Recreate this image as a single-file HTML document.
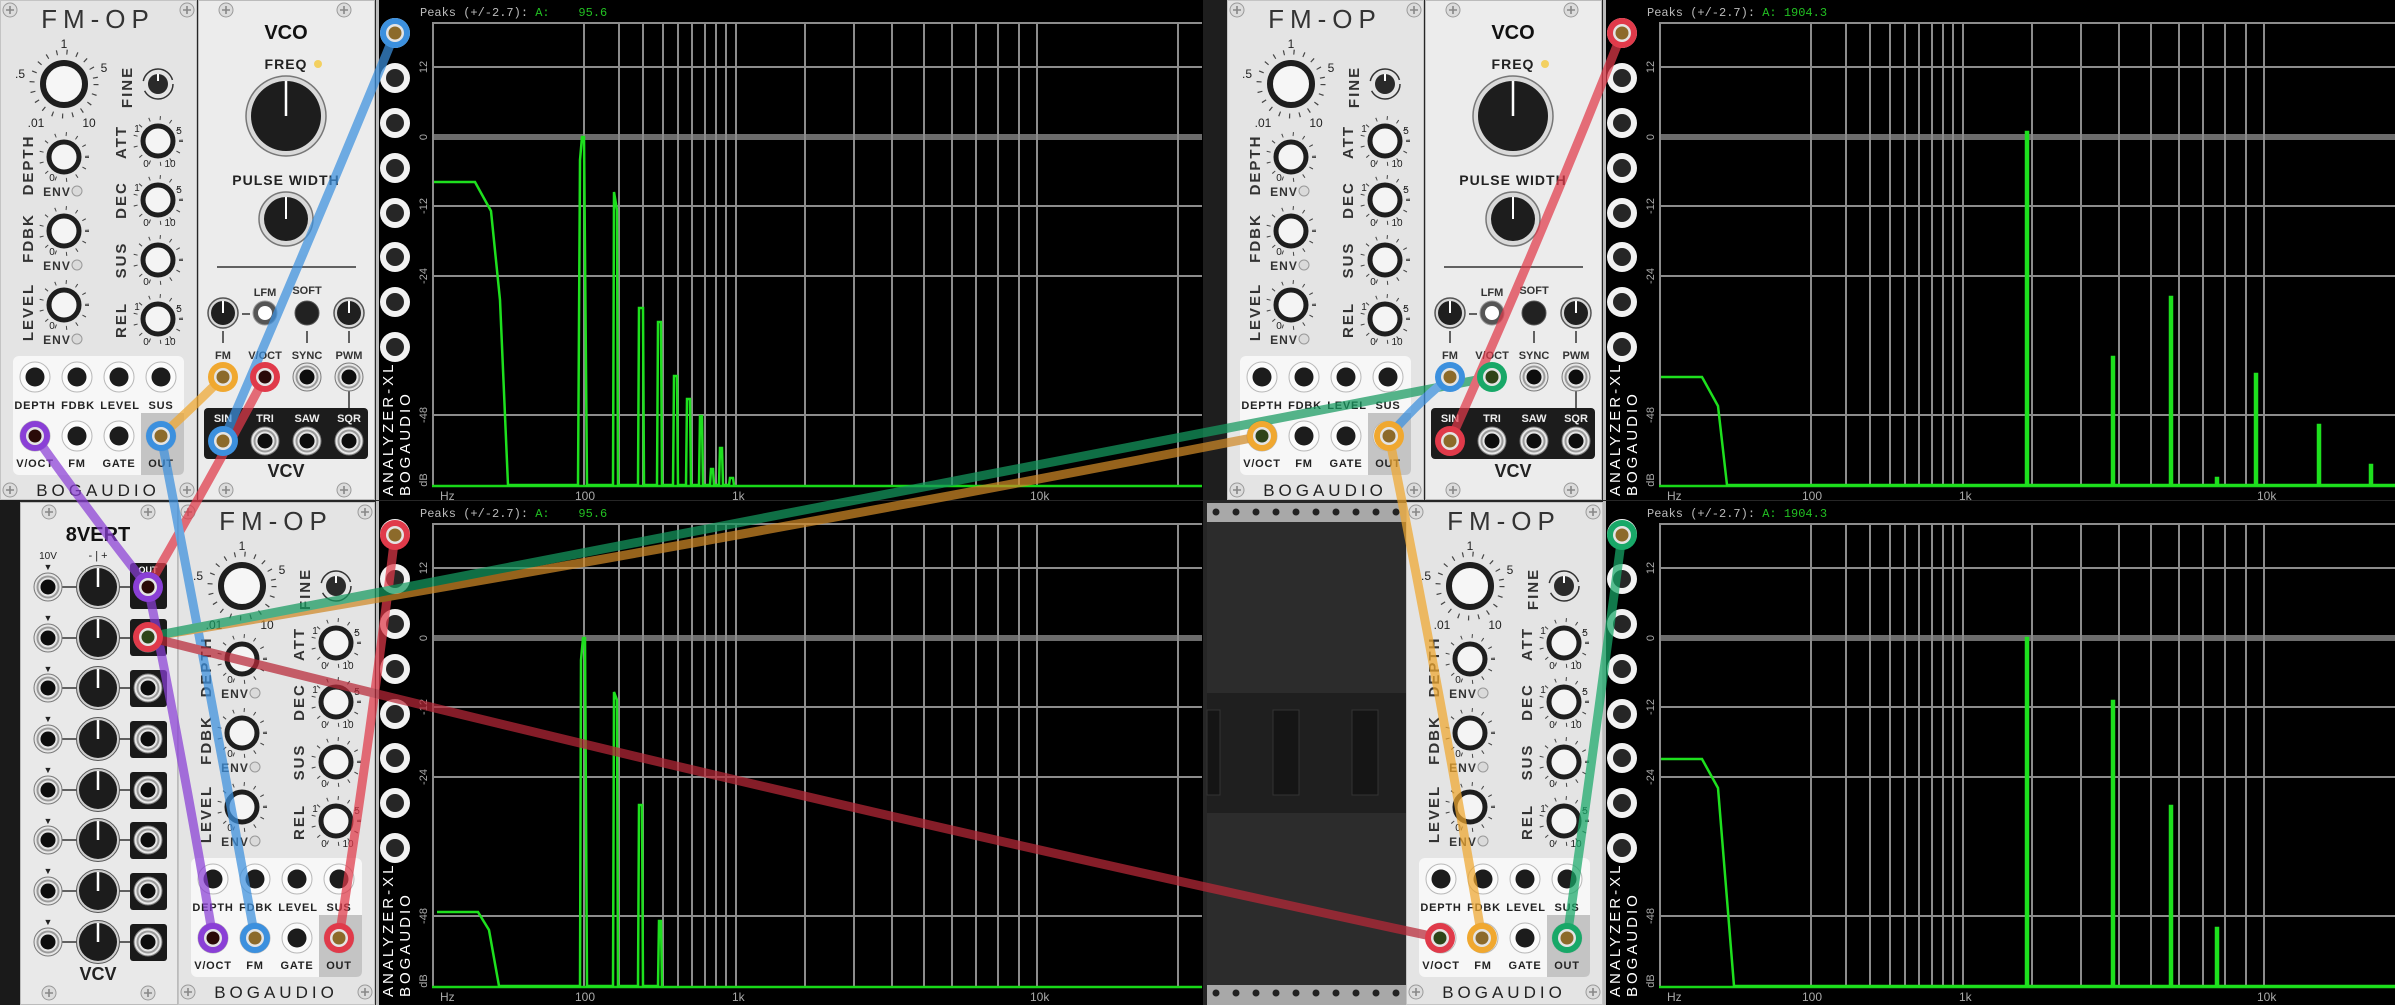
<!DOCTYPE html>
<html><head><meta charset="utf-8"><style>
html,body{margin:0;padding:0;background:#222;}
svg{display:block}
text{font-family:"Liberation Sans",sans-serif;}
.m{font-family:"Liberation Mono",monospace;}
.jl{font-size:11px;font-weight:bold;fill:#222;letter-spacing:0.8px;}
</style></head><body>
<svg width="2395" height="1005" viewBox="0 0 2395 1005" xmlns="http://www.w3.org/2000/svg">
<defs>
<g id="scr"><circle r="7" fill="#dcdcdc" stroke="#9a9a9a" stroke-width="1"/><path d="M-4 0H4M0 -4V4" stroke="#888" stroke-width="1.6"/></g>
<g id="jw"><circle r="15" fill="#fbfbfb" stroke="#b8b8b8" stroke-width="1"/><circle r="9.5" fill="#1c1c1c"/></g>
<g id="jv"><circle r="14" fill="#e6e6e6" stroke="#7a7a7a" stroke-width="1"/><circle r="10.5" fill="none" stroke="#9a9a9a" stroke-width="2"/><circle r="7.5" fill="#0d0d0d"/></g>
<g id="aj"><circle r="15" fill="#f2f2f2"/><circle r="9" fill="#262626"/></g>
<g id="kw"><circle r="23" fill="none" stroke="#444" stroke-width="4" stroke-dasharray="1 10"/><circle r="15" fill="#f4f4f4" stroke="#1e1e1e" stroke-width="5"/></g>
<g id="kwl"><circle r="32" fill="none" stroke="#444" stroke-width="5" stroke-dasharray="1.2 9"/><circle r="21" fill="#f6f6f6" stroke="#1e1e1e" stroke-width="6"/></g>
<g id="kf"><circle r="15" fill="none" stroke="#333" stroke-width="1.5" stroke-dasharray="40 10"/><circle r="10" fill="#2a2a2a"/><path d="M0 -10V-3" stroke="#fff" stroke-width="2"/></g>
<g id="kb"><circle r="15" fill="#d8d8d8" stroke="#555" stroke-width="1.5"/><circle r="12" fill="#1f1f1f"/><path d="M0 0V-12" stroke="#fff" stroke-width="2"/></g>
<g id="k8"><circle r="21.5" fill="#cfcfcf" stroke="#555"/><circle r="19" fill="#1c1c1c"/><path d="M0 0V-19" stroke="#fff" stroke-width="2.5"/></g>
<g id="pl"><circle r="9" fill="#e4e4e4"/><circle r="6.5" fill="#8c6a2a"/></g>
<g id="pld"><circle r="9" fill="#e4e4e4"/><circle r="6.5" fill="#2a0a08"/></g>
<g id="grid" stroke="#8c8c8c" stroke-width="2" fill="none">
<path d="M432 23H1202M432 67H1202M432 206H1202M432 276H1202M432 415H1202"/>
<path d="M432 137H1202" stroke="#6c6c6c" stroke-width="6"/>
<path d="M433 22V487M584 22V487M619 22V487M643 22V487M663 22V487M678 22V487M692 22V487M705 22V487M716 22V487M726 22V487M736 22V487M805 22V487M854 22V487M892 22V487M924 22V487M952 22V487M976 22V487M998 22V487M1019 22V487M1037 22V487M1178 22V487"/>
<path d="M432 486H1202" stroke="#18d818" stroke-width="2.5"/>
</g>
<g id="ajacks"><use href="#aj" x="395" y="33"/><use href="#aj" x="395" y="78"/><use href="#aj" x="395" y="123"/><use href="#aj" x="395" y="168"/><use href="#aj" x="395" y="213"/><use href="#aj" x="395" y="257"/><use href="#aj" x="395" y="302"/><use href="#aj" x="395" y="347"/></g>
</defs>

<rect width="2395" height="1005" fill="#262626"/>
<rect x="0" y="500" width="20" height="505" fill="#1a1a1a"/>
<rect x="1200" y="0" width="28" height="500" fill="#1e1e1e"/>
<rect x="1207" y="503" width="199" height="502" fill="#2c2c2c"/>
<rect x="1207" y="693" width="199" height="120" fill="#1f1f1f"/>
<rect x="1207" y="503" width="199" height="19" fill="#a8a8a8"/>
<rect x="1207" y="985" width="199" height="20" fill="#a8a8a8"/>
<g fill="#222"><circle cx="1216" cy="512" r="3.5"/><circle cx="1236" cy="512" r="3.5"/><circle cx="1256" cy="512" r="3.5"/><circle cx="1276" cy="512" r="3.5"/><circle cx="1296" cy="512" r="3.5"/><circle cx="1316" cy="512" r="3.5"/><circle cx="1336" cy="512" r="3.5"/><circle cx="1356" cy="512" r="3.5"/><circle cx="1376" cy="512" r="3.5"/><circle cx="1396" cy="512" r="3.5"/>
<circle cx="1216" cy="993" r="3.5"/><circle cx="1236" cy="993" r="3.5"/><circle cx="1256" cy="993" r="3.5"/><circle cx="1276" cy="993" r="3.5"/><circle cx="1296" cy="993" r="3.5"/><circle cx="1316" cy="993" r="3.5"/><circle cx="1336" cy="993" r="3.5"/><circle cx="1356" cy="993" r="3.5"/><circle cx="1376" cy="993" r="3.5"/><circle cx="1396" cy="993" r="3.5"/></g>
<g fill="#151515" stroke="#333"><rect x="1207" y="710" width="13" height="85"/><rect x="1273" y="710" width="26" height="85"/><rect x="1352" y="710" width="26" height="85"/></g>

<!-- FMOP 1 -->
<g transform="translate(0,0)">
<rect x="0.5" y="0.5" width="196" height="499" fill="#e4e4e4" stroke="#c4c4c4"/>
<use href="#scr" x="10" y="10"/><use href="#scr" x="187" y="10"/><use href="#scr" x="10" y="490"/><use href="#scr" x="187" y="490"/>
<text x="98" y="28" text-anchor="middle" font-size="26" letter-spacing="6" fill="#333">FM-OP</text>
<use href="#kwl" x="64" y="84"/>
<text x="20" y="78" font-size="12" fill="#222" text-anchor="middle">.5</text><text x="64" y="48" font-size="12" fill="#222" text-anchor="middle">1</text><text x="104" y="72" font-size="12" fill="#222" text-anchor="middle">5</text><text x="36" y="127" font-size="12" fill="#222" text-anchor="middle">.01</text><text x="89" y="127" font-size="12" fill="#222" text-anchor="middle">10</text>
<text transform="translate(132,87) rotate(-90)" text-anchor="middle" font-size="15" font-weight="bold" letter-spacing="2" fill="#333">FINE</text>
<use href="#kf" x="158" y="84"/>
<text transform="translate(33,165) rotate(-90)" text-anchor="middle" font-size="15" font-weight="bold" letter-spacing="2" fill="#333">DEPTH</text>
<text transform="translate(33,238) rotate(-90)" text-anchor="middle" font-size="15" font-weight="bold" letter-spacing="2" fill="#333">FDBK</text>
<text transform="translate(33,312) rotate(-90)" text-anchor="middle" font-size="15" font-weight="bold" letter-spacing="2" fill="#333">LEVEL</text>
<text transform="translate(126,142) rotate(-90)" text-anchor="middle" font-size="15" font-weight="bold" letter-spacing="2" fill="#333">ATT</text>
<text transform="translate(126,200) rotate(-90)" text-anchor="middle" font-size="15" font-weight="bold" letter-spacing="2" fill="#333">DEC</text>
<text transform="translate(126,260) rotate(-90)" text-anchor="middle" font-size="15" font-weight="bold" letter-spacing="2" fill="#333">SUS</text>
<text transform="translate(126,320) rotate(-90)" text-anchor="middle" font-size="15" font-weight="bold" letter-spacing="2" fill="#333">REL</text>
<use href="#kw" x="64" y="157"/><use href="#kw" x="64" y="231"/><use href="#kw" x="64" y="305"/>
<use href="#kw" x="158" y="141"/><use href="#kw" x="158" y="200"/><use href="#kw" x="158" y="260"/><use href="#kw" x="158" y="319"/>
<g font-size="10" fill="#222" text-anchor="middle"><text x="52" y="181">0</text><text x="52" y="255">0</text><text x="52" y="329">0</text>
<text x="137" y="132">1</text><text x="179" y="134">5</text><text x="146" y="167">0</text><text x="170" y="167">10</text>
<text x="137" y="191">1</text><text x="179" y="193">5</text><text x="146" y="226">0</text><text x="170" y="226">10</text>
<text x="146" y="285">0</text>
<text x="137" y="310">1</text><text x="179" y="312">5</text><text x="146" y="345">0</text><text x="170" y="345">10</text></g>
<g font-size="12" font-weight="bold" fill="#333" text-anchor="middle" letter-spacing="1"><text x="57" y="196">ENV</text><text x="57" y="270">ENV</text><text x="57" y="344">ENV</text></g>
<g fill="#dadada" stroke="#999"><circle cx="77" cy="191" r="5"/><circle cx="77" cy="265" r="5"/><circle cx="77" cy="339" r="5"/></g>
<rect x="13" y="356" width="171" height="119" rx="6" fill="#f7f7f7"/>
<path d="M141 413H184V469Q184 475 178 475H141Z" fill="#c4c4c4"/>
<use href="#jw" x="35" y="377"/><use href="#jw" x="77" y="377"/><use href="#jw" x="119" y="377"/><use href="#jw" x="161" y="377"/>
<use href="#jw" x="35" y="436"/><use href="#jw" x="77" y="436"/><use href="#jw" x="119" y="436"/><use href="#jw" x="161" y="436"/>
<g class="jl" text-anchor="middle"><text x="35" y="409">DEPTH</text><text x="78" y="409">FDBK</text><text x="120" y="409">LEVEL</text><text x="161" y="409">SUS</text><text x="35" y="467">V/OCT</text><text x="77" y="467">FM</text><text x="119" y="467">GATE</text><text x="161" y="467">OUT</text></g>
<text x="98" y="496" text-anchor="middle" font-size="17" letter-spacing="4" fill="#222">BOGAUDIO</text>
</g>

<!-- FMOP 2 -->
<g transform="translate(178,502)">
<rect x="0.5" y="0.5" width="196" height="502" fill="#e4e4e4" stroke="#c4c4c4"/>
<use href="#scr" x="10" y="10"/><use href="#scr" x="187" y="10"/><use href="#scr" x="10" y="490"/><use href="#scr" x="187" y="490"/>
<text x="98" y="28" text-anchor="middle" font-size="26" letter-spacing="6" fill="#333">FM-OP</text>
<use href="#kwl" x="64" y="84"/>
<text x="20" y="78" font-size="12" fill="#222" text-anchor="middle">.5</text><text x="64" y="48" font-size="12" fill="#222" text-anchor="middle">1</text><text x="104" y="72" font-size="12" fill="#222" text-anchor="middle">5</text><text x="36" y="127" font-size="12" fill="#222" text-anchor="middle">.01</text><text x="89" y="127" font-size="12" fill="#222" text-anchor="middle">10</text>
<text transform="translate(132,87) rotate(-90)" text-anchor="middle" font-size="15" font-weight="bold" letter-spacing="2" fill="#333">FINE</text>
<use href="#kf" x="158" y="84"/>
<text transform="translate(33,165) rotate(-90)" text-anchor="middle" font-size="15" font-weight="bold" letter-spacing="2" fill="#333">DEPTH</text>
<text transform="translate(33,238) rotate(-90)" text-anchor="middle" font-size="15" font-weight="bold" letter-spacing="2" fill="#333">FDBK</text>
<text transform="translate(33,312) rotate(-90)" text-anchor="middle" font-size="15" font-weight="bold" letter-spacing="2" fill="#333">LEVEL</text>
<text transform="translate(126,142) rotate(-90)" text-anchor="middle" font-size="15" font-weight="bold" letter-spacing="2" fill="#333">ATT</text>
<text transform="translate(126,200) rotate(-90)" text-anchor="middle" font-size="15" font-weight="bold" letter-spacing="2" fill="#333">DEC</text>
<text transform="translate(126,260) rotate(-90)" text-anchor="middle" font-size="15" font-weight="bold" letter-spacing="2" fill="#333">SUS</text>
<text transform="translate(126,320) rotate(-90)" text-anchor="middle" font-size="15" font-weight="bold" letter-spacing="2" fill="#333">REL</text>
<use href="#kw" x="64" y="157"/><use href="#kw" x="64" y="231"/><use href="#kw" x="64" y="305"/>
<use href="#kw" x="158" y="141"/><use href="#kw" x="158" y="200"/><use href="#kw" x="158" y="260"/><use href="#kw" x="158" y="319"/>
<g font-size="10" fill="#222" text-anchor="middle"><text x="52" y="181">0</text><text x="52" y="255">0</text><text x="52" y="329">0</text>
<text x="137" y="132">1</text><text x="179" y="134">5</text><text x="146" y="167">0</text><text x="170" y="167">10</text>
<text x="137" y="191">1</text><text x="179" y="193">5</text><text x="146" y="226">0</text><text x="170" y="226">10</text>
<text x="146" y="285">0</text>
<text x="137" y="310">1</text><text x="179" y="312">5</text><text x="146" y="345">0</text><text x="170" y="345">10</text></g>
<g font-size="12" font-weight="bold" fill="#333" text-anchor="middle" letter-spacing="1"><text x="57" y="196">ENV</text><text x="57" y="270">ENV</text><text x="57" y="344">ENV</text></g>
<g fill="#dadada" stroke="#999"><circle cx="77" cy="191" r="5"/><circle cx="77" cy="265" r="5"/><circle cx="77" cy="339" r="5"/></g>
<rect x="13" y="356" width="171" height="119" rx="6" fill="#f7f7f7"/>
<path d="M141 413H184V469Q184 475 178 475H141Z" fill="#c4c4c4"/>
<use href="#jw" x="35" y="377"/><use href="#jw" x="77" y="377"/><use href="#jw" x="119" y="377"/><use href="#jw" x="161" y="377"/>
<use href="#jw" x="35" y="436"/><use href="#jw" x="77" y="436"/><use href="#jw" x="119" y="436"/><use href="#jw" x="161" y="436"/>
<g class="jl" text-anchor="middle"><text x="35" y="409">DEPTH</text><text x="78" y="409">FDBK</text><text x="120" y="409">LEVEL</text><text x="161" y="409">SUS</text><text x="35" y="467">V/OCT</text><text x="77" y="467">FM</text><text x="119" y="467">GATE</text><text x="161" y="467">OUT</text></g>
<text x="98" y="496" text-anchor="middle" font-size="17" letter-spacing="4" fill="#222">BOGAUDIO</text>
</g>

<!-- FMOP 3 -->
<g transform="translate(1227,0)">
<rect x="0.5" y="0.5" width="196" height="499" fill="#e4e4e4" stroke="#c4c4c4"/>
<use href="#scr" x="10" y="10"/><use href="#scr" x="187" y="10"/><use href="#scr" x="10" y="490"/><use href="#scr" x="187" y="490"/>
<text x="98" y="28" text-anchor="middle" font-size="26" letter-spacing="6" fill="#333">FM-OP</text>
<use href="#kwl" x="64" y="84"/>
<text x="20" y="78" font-size="12" fill="#222" text-anchor="middle">.5</text><text x="64" y="48" font-size="12" fill="#222" text-anchor="middle">1</text><text x="104" y="72" font-size="12" fill="#222" text-anchor="middle">5</text><text x="36" y="127" font-size="12" fill="#222" text-anchor="middle">.01</text><text x="89" y="127" font-size="12" fill="#222" text-anchor="middle">10</text>
<text transform="translate(132,87) rotate(-90)" text-anchor="middle" font-size="15" font-weight="bold" letter-spacing="2" fill="#333">FINE</text>
<use href="#kf" x="158" y="84"/>
<text transform="translate(33,165) rotate(-90)" text-anchor="middle" font-size="15" font-weight="bold" letter-spacing="2" fill="#333">DEPTH</text>
<text transform="translate(33,238) rotate(-90)" text-anchor="middle" font-size="15" font-weight="bold" letter-spacing="2" fill="#333">FDBK</text>
<text transform="translate(33,312) rotate(-90)" text-anchor="middle" font-size="15" font-weight="bold" letter-spacing="2" fill="#333">LEVEL</text>
<text transform="translate(126,142) rotate(-90)" text-anchor="middle" font-size="15" font-weight="bold" letter-spacing="2" fill="#333">ATT</text>
<text transform="translate(126,200) rotate(-90)" text-anchor="middle" font-size="15" font-weight="bold" letter-spacing="2" fill="#333">DEC</text>
<text transform="translate(126,260) rotate(-90)" text-anchor="middle" font-size="15" font-weight="bold" letter-spacing="2" fill="#333">SUS</text>
<text transform="translate(126,320) rotate(-90)" text-anchor="middle" font-size="15" font-weight="bold" letter-spacing="2" fill="#333">REL</text>
<use href="#kw" x="64" y="157"/><use href="#kw" x="64" y="231"/><use href="#kw" x="64" y="305"/>
<use href="#kw" x="158" y="141"/><use href="#kw" x="158" y="200"/><use href="#kw" x="158" y="260"/><use href="#kw" x="158" y="319"/>
<g font-size="10" fill="#222" text-anchor="middle"><text x="52" y="181">0</text><text x="52" y="255">0</text><text x="52" y="329">0</text>
<text x="137" y="132">1</text><text x="179" y="134">5</text><text x="146" y="167">0</text><text x="170" y="167">10</text>
<text x="137" y="191">1</text><text x="179" y="193">5</text><text x="146" y="226">0</text><text x="170" y="226">10</text>
<text x="146" y="285">0</text>
<text x="137" y="310">1</text><text x="179" y="312">5</text><text x="146" y="345">0</text><text x="170" y="345">10</text></g>
<g font-size="12" font-weight="bold" fill="#333" text-anchor="middle" letter-spacing="1"><text x="57" y="196">ENV</text><text x="57" y="270">ENV</text><text x="57" y="344">ENV</text></g>
<g fill="#dadada" stroke="#999"><circle cx="77" cy="191" r="5"/><circle cx="77" cy="265" r="5"/><circle cx="77" cy="339" r="5"/></g>
<rect x="13" y="356" width="171" height="119" rx="6" fill="#f7f7f7"/>
<path d="M141 413H184V469Q184 475 178 475H141Z" fill="#c4c4c4"/>
<use href="#jw" x="35" y="377"/><use href="#jw" x="77" y="377"/><use href="#jw" x="119" y="377"/><use href="#jw" x="161" y="377"/>
<use href="#jw" x="35" y="436"/><use href="#jw" x="77" y="436"/><use href="#jw" x="119" y="436"/><use href="#jw" x="161" y="436"/>
<g class="jl" text-anchor="middle"><text x="35" y="409">DEPTH</text><text x="78" y="409">FDBK</text><text x="120" y="409">LEVEL</text><text x="161" y="409">SUS</text><text x="35" y="467">V/OCT</text><text x="77" y="467">FM</text><text x="119" y="467">GATE</text><text x="161" y="467">OUT</text></g>
<text x="98" y="496" text-anchor="middle" font-size="17" letter-spacing="4" fill="#222">BOGAUDIO</text>
</g>

<!-- FMOP 4 -->
<g transform="translate(1406,502)">
<rect x="0.5" y="0.5" width="196" height="502" fill="#e4e4e4" stroke="#c4c4c4"/>
<use href="#scr" x="10" y="10"/><use href="#scr" x="187" y="10"/><use href="#scr" x="10" y="490"/><use href="#scr" x="187" y="490"/>
<text x="98" y="28" text-anchor="middle" font-size="26" letter-spacing="6" fill="#333">FM-OP</text>
<use href="#kwl" x="64" y="84"/>
<text x="20" y="78" font-size="12" fill="#222" text-anchor="middle">.5</text><text x="64" y="48" font-size="12" fill="#222" text-anchor="middle">1</text><text x="104" y="72" font-size="12" fill="#222" text-anchor="middle">5</text><text x="36" y="127" font-size="12" fill="#222" text-anchor="middle">.01</text><text x="89" y="127" font-size="12" fill="#222" text-anchor="middle">10</text>
<text transform="translate(132,87) rotate(-90)" text-anchor="middle" font-size="15" font-weight="bold" letter-spacing="2" fill="#333">FINE</text>
<use href="#kf" x="158" y="84"/>
<text transform="translate(33,165) rotate(-90)" text-anchor="middle" font-size="15" font-weight="bold" letter-spacing="2" fill="#333">DEPTH</text>
<text transform="translate(33,238) rotate(-90)" text-anchor="middle" font-size="15" font-weight="bold" letter-spacing="2" fill="#333">FDBK</text>
<text transform="translate(33,312) rotate(-90)" text-anchor="middle" font-size="15" font-weight="bold" letter-spacing="2" fill="#333">LEVEL</text>
<text transform="translate(126,142) rotate(-90)" text-anchor="middle" font-size="15" font-weight="bold" letter-spacing="2" fill="#333">ATT</text>
<text transform="translate(126,200) rotate(-90)" text-anchor="middle" font-size="15" font-weight="bold" letter-spacing="2" fill="#333">DEC</text>
<text transform="translate(126,260) rotate(-90)" text-anchor="middle" font-size="15" font-weight="bold" letter-spacing="2" fill="#333">SUS</text>
<text transform="translate(126,320) rotate(-90)" text-anchor="middle" font-size="15" font-weight="bold" letter-spacing="2" fill="#333">REL</text>
<use href="#kw" x="64" y="157"/><use href="#kw" x="64" y="231"/><use href="#kw" x="64" y="305"/>
<use href="#kw" x="158" y="141"/><use href="#kw" x="158" y="200"/><use href="#kw" x="158" y="260"/><use href="#kw" x="158" y="319"/>
<g font-size="10" fill="#222" text-anchor="middle"><text x="52" y="181">0</text><text x="52" y="255">0</text><text x="52" y="329">0</text>
<text x="137" y="132">1</text><text x="179" y="134">5</text><text x="146" y="167">0</text><text x="170" y="167">10</text>
<text x="137" y="191">1</text><text x="179" y="193">5</text><text x="146" y="226">0</text><text x="170" y="226">10</text>
<text x="146" y="285">0</text>
<text x="137" y="310">1</text><text x="179" y="312">5</text><text x="146" y="345">0</text><text x="170" y="345">10</text></g>
<g font-size="12" font-weight="bold" fill="#333" text-anchor="middle" letter-spacing="1"><text x="57" y="196">ENV</text><text x="57" y="270">ENV</text><text x="57" y="344">ENV</text></g>
<g fill="#dadada" stroke="#999"><circle cx="77" cy="191" r="5"/><circle cx="77" cy="265" r="5"/><circle cx="77" cy="339" r="5"/></g>
<rect x="13" y="356" width="171" height="119" rx="6" fill="#f7f7f7"/>
<path d="M141 413H184V469Q184 475 178 475H141Z" fill="#c4c4c4"/>
<use href="#jw" x="35" y="377"/><use href="#jw" x="77" y="377"/><use href="#jw" x="119" y="377"/><use href="#jw" x="161" y="377"/>
<use href="#jw" x="35" y="436"/><use href="#jw" x="77" y="436"/><use href="#jw" x="119" y="436"/><use href="#jw" x="161" y="436"/>
<g class="jl" text-anchor="middle"><text x="35" y="409">DEPTH</text><text x="78" y="409">FDBK</text><text x="120" y="409">LEVEL</text><text x="161" y="409">SUS</text><text x="35" y="467">V/OCT</text><text x="77" y="467">FM</text><text x="119" y="467">GATE</text><text x="161" y="467">OUT</text></g>
<text x="98" y="496" text-anchor="middle" font-size="17" letter-spacing="4" fill="#222">BOGAUDIO</text>
</g>

<!-- VCO -->
<g transform="translate(198,0)">
<rect x="0.5" y="0.5" width="176" height="499" fill="#ececec" stroke="#bbb"/>
<use href="#scr" x="28" y="10"/><use href="#scr" x="146" y="10"/><use href="#scr" x="28" y="490"/><use href="#scr" x="146" y="490"/>
<text x="88" y="39" text-anchor="middle" font-size="20" font-weight="bold" fill="#111">VCO</text>
<text x="88" y="69" text-anchor="middle" font-size="14" font-weight="bold" letter-spacing="1" fill="#222">FREQ</text>
<circle cx="120" cy="64" r="4" fill="#f3d060"/>
<circle cx="88" cy="116" r="40" fill="#d9d9d9" stroke="#777" stroke-width="1.5"/><circle cx="88" cy="116" r="35" fill="#1d1d1d"/><path d="M88 116V81" stroke="#fff" stroke-width="2.5"/>
<text x="88" y="185" text-anchor="middle" font-size="14" font-weight="bold" letter-spacing="1" fill="#222">PULSE WIDTH</text>
<circle cx="88" cy="219" r="27" fill="#d9d9d9" stroke="#777" stroke-width="1.5"/><circle cx="88" cy="219" r="22" fill="#1d1d1d"/><path d="M88 219V197" stroke="#fff" stroke-width="2"/>
<path d="M19 267H158" stroke="#333" stroke-width="1.5"/>
<text x="67" y="296" text-anchor="middle" font-size="11" font-weight="bold" fill="#333">LFM</text><text x="109" y="294" text-anchor="middle" font-size="11" font-weight="bold" fill="#333">SOFT</text>
<use href="#kb" x="25" y="313"/><path d="M44 314H52" stroke="#333" stroke-width="1.5"/><circle cx="67" cy="313" r="12" fill="#555" stroke="#999"/><circle cx="67" cy="313" r="7" fill="#fff"/><circle cx="109" cy="313" r="12" fill="#222" stroke="#555"/><use href="#kb" x="151" y="313"/>
<path d="M25 331V343M109 331V343M151 331V343M151 390V408" stroke="#333" stroke-width="1.5"/>
<g font-size="11" font-weight="bold" fill="#333" text-anchor="middle"><text x="25" y="359">FM</text><text x="67" y="359">V/OCT</text><text x="109" y="359">SYNC</text><text x="151" y="359">PWM</text></g>
<use href="#jv" x="25" y="377"/><use href="#jv" x="67" y="377"/><use href="#jv" x="109" y="377"/><use href="#jv" x="151" y="377"/>
<rect x="6" y="408" width="164" height="51" rx="4" fill="#1c1c1c"/>
<g font-size="11" font-weight="bold" fill="#eee" text-anchor="middle"><text x="25" y="422">SIN</text><text x="67" y="422">TRI</text><text x="109" y="422">SAW</text><text x="151" y="422">SQR</text></g>
<use href="#jv" x="25" y="441"/><use href="#jv" x="67" y="441"/><use href="#jv" x="109" y="441"/><use href="#jv" x="151" y="441"/>
<text x="88" y="477" text-anchor="middle" font-size="18" font-weight="bold" fill="#222">VCV</text>
</g>
<g transform="translate(1425,0)">
<rect x="0.5" y="0.5" width="176" height="499" fill="#ececec" stroke="#bbb"/>
<use href="#scr" x="28" y="10"/><use href="#scr" x="146" y="10"/><use href="#scr" x="28" y="490"/><use href="#scr" x="146" y="490"/>
<text x="88" y="39" text-anchor="middle" font-size="20" font-weight="bold" fill="#111">VCO</text>
<text x="88" y="69" text-anchor="middle" font-size="14" font-weight="bold" letter-spacing="1" fill="#222">FREQ</text>
<circle cx="120" cy="64" r="4" fill="#f3d060"/>
<circle cx="88" cy="116" r="40" fill="#d9d9d9" stroke="#777" stroke-width="1.5"/><circle cx="88" cy="116" r="35" fill="#1d1d1d"/><path d="M88 116V81" stroke="#fff" stroke-width="2.5"/>
<text x="88" y="185" text-anchor="middle" font-size="14" font-weight="bold" letter-spacing="1" fill="#222">PULSE WIDTH</text>
<circle cx="88" cy="219" r="27" fill="#d9d9d9" stroke="#777" stroke-width="1.5"/><circle cx="88" cy="219" r="22" fill="#1d1d1d"/><path d="M88 219V197" stroke="#fff" stroke-width="2"/>
<path d="M19 267H158" stroke="#333" stroke-width="1.5"/>
<text x="67" y="296" text-anchor="middle" font-size="11" font-weight="bold" fill="#333">LFM</text><text x="109" y="294" text-anchor="middle" font-size="11" font-weight="bold" fill="#333">SOFT</text>
<use href="#kb" x="25" y="313"/><path d="M44 314H52" stroke="#333" stroke-width="1.5"/><circle cx="67" cy="313" r="12" fill="#555" stroke="#999"/><circle cx="67" cy="313" r="7" fill="#fff"/><circle cx="109" cy="313" r="12" fill="#222" stroke="#555"/><use href="#kb" x="151" y="313"/>
<path d="M25 331V343M109 331V343M151 331V343M151 390V408" stroke="#333" stroke-width="1.5"/>
<g font-size="11" font-weight="bold" fill="#333" text-anchor="middle"><text x="25" y="359">FM</text><text x="67" y="359">V/OCT</text><text x="109" y="359">SYNC</text><text x="151" y="359">PWM</text></g>
<use href="#jv" x="25" y="377"/><use href="#jv" x="67" y="377"/><use href="#jv" x="109" y="377"/><use href="#jv" x="151" y="377"/>
<rect x="6" y="408" width="164" height="51" rx="4" fill="#1c1c1c"/>
<g font-size="11" font-weight="bold" fill="#eee" text-anchor="middle"><text x="25" y="422">SIN</text><text x="67" y="422">TRI</text><text x="109" y="422">SAW</text><text x="151" y="422">SQR</text></g>
<use href="#jv" x="25" y="441"/><use href="#jv" x="67" y="441"/><use href="#jv" x="109" y="441"/><use href="#jv" x="151" y="441"/>
<text x="88" y="477" text-anchor="middle" font-size="18" font-weight="bold" fill="#222">VCV</text>
</g>

<!-- 8VERT -->
<g transform="translate(20,502)">
<rect x="0.5" y="0.5" width="157" height="502" fill="#e9e9e9" stroke="#bbb"/>
<use href="#scr" x="29" y="10"/><use href="#scr" x="128" y="10"/><use href="#scr" x="29" y="491"/><use href="#scr" x="128" y="491"/>
<text x="78" y="39" text-anchor="middle" font-size="20" font-weight="bold" fill="#111">8VERT</text>
<text x="28" y="57" text-anchor="middle" font-size="10" fill="#222">10V</text><text x="78" y="57" text-anchor="middle" font-size="11" fill="#222">- | +</text>
<g fill="#222" font-size="9" text-anchor="middle"><text x="28" y="68">▼</text><text x="28" y="119">▼</text><text x="28" y="170">▼</text><text x="28" y="220">▼</text><text x="28" y="271">▼</text><text x="28" y="322">▼</text><text x="28" y="372">▼</text><text x="28" y="423">▼</text></g>
<g stroke="#333" stroke-width="1.5"><path d="M28 85H128M28 136H128M28 186H128M28 237H128M28 288H128M28 338H128M28 389H128M28 440H128"/></g>
<g fill="#1a1a1a"><rect x="110" y="61" width="37" height="46" rx="3"/><rect x="110" y="117" width="37" height="37" rx="3"/><rect x="110" y="168" width="37" height="37" rx="3"/><rect x="110" y="219" width="37" height="37" rx="3"/><rect x="110" y="270" width="37" height="37" rx="3"/><rect x="110" y="320" width="37" height="37" rx="3"/><rect x="110" y="371" width="37" height="37" rx="3"/><rect x="110" y="422" width="37" height="37" rx="3"/></g>
<text x="128" y="71" text-anchor="middle" font-size="9" font-weight="bold" fill="#fff">OUT</text>
<use href="#jv" x="28" y="85"/><use href="#jv" x="28" y="136"/><use href="#jv" x="28" y="186"/><use href="#jv" x="28" y="237"/><use href="#jv" x="28" y="288"/><use href="#jv" x="28" y="338"/><use href="#jv" x="28" y="389"/><use href="#jv" x="28" y="440"/>
<use href="#k8" x="78" y="85"/><use href="#k8" x="78" y="136"/><use href="#k8" x="78" y="186"/><use href="#k8" x="78" y="237"/><use href="#k8" x="78" y="288"/><use href="#k8" x="78" y="338"/><use href="#k8" x="78" y="389"/><use href="#k8" x="78" y="440"/>
<use href="#jv" x="128" y="85"/><use href="#jv" x="128" y="136"/><use href="#jv" x="128" y="186"/><use href="#jv" x="128" y="237"/><use href="#jv" x="128" y="288"/><use href="#jv" x="128" y="338"/><use href="#jv" x="128" y="389"/><use href="#jv" x="128" y="440"/>
<text x="78" y="478" text-anchor="middle" font-size="18" font-weight="bold" fill="#222">VCV</text>
</g>

<!-- Analyzers -->
<g>
<rect x="376" y="0" width="827" height="500" fill="#000"/>
<rect x="376" y="0" width="3" height="500" fill="#bbb"/>
<use href="#ajacks"/><use href="#grid"/>
<text class="m" x="420" y="16" font-size="12" fill="#bbb" xml:space="preserve">Peaks (+/-2.7): <tspan fill="#22c022">A:    95.6</tspan></text>
<g class="m" font-size="11" fill="#aaa" text-anchor="middle"><text transform="translate(427,67) rotate(-90)">12</text><text transform="translate(427,137) rotate(-90)">0</text><text transform="translate(427,206) rotate(-90)">-12</text><text transform="translate(427,276) rotate(-90)">-24</text><text transform="translate(427,415) rotate(-90)">-48</text><text transform="translate(427,480) rotate(-90)">dB</text></g>
<g class="m" font-size="12" fill="#aaa"><text x="440" y="500">Hz</text><text x="575" y="500">100</text><text x="732" y="500">1k</text><text x="1030" y="500">10k</text></g>
<text transform="translate(393,496) rotate(-90)" font-size="15" letter-spacing="3" fill="#fff">ANALYZER-XL</text>
<text transform="translate(410,496) rotate(-90)" font-size="15" letter-spacing="3" fill="#fff">BOGAUDIO</text>
<polyline fill="none" stroke="#1ee01e" stroke-width="2.5" points="434,182 475,182 491,211 500,300 508,485 578,485 580,160 582,137 584,137 587,485 613,485 614,192 617,210 618,485 638,485 639,308 643,308 644,485 657,485 658,322 661,322 662,485 673,485 674,376 677,376 678,485 686,485 687,399 690,399 691,485 699,485 700,416 702,416 703,485 710,485 711,469 713,469 714,485 719,485 720,448 722,448 723,485 729,485 730,478 733,478 734,485"/>
</g>
<g>
<rect x="376" y="501" width="827" height="504" fill="#000"/>
<rect x="376" y="501" width="3" height="504" fill="#bbb"/>
<g transform="translate(0,501)"><use href="#ajacks"/><use href="#grid"/></g>
<text class="m" x="420" y="517" font-size="12" fill="#bbb" xml:space="preserve">Peaks (+/-2.7): <tspan fill="#22c022">A:    95.6</tspan></text>
<g class="m" font-size="11" fill="#aaa" text-anchor="middle"><text transform="translate(427,568) rotate(-90)">12</text><text transform="translate(427,638) rotate(-90)">0</text><text transform="translate(427,707) rotate(-90)">-12</text><text transform="translate(427,777) rotate(-90)">-24</text><text transform="translate(427,916) rotate(-90)">-48</text><text transform="translate(427,981) rotate(-90)">dB</text></g>
<g class="m" font-size="12" fill="#aaa"><text x="440" y="1001">Hz</text><text x="575" y="1001">100</text><text x="732" y="1001">1k</text><text x="1030" y="1001">10k</text></g>
<text transform="translate(393,997) rotate(-90)" font-size="15" letter-spacing="3" fill="#fff">ANALYZER-XL</text>
<text transform="translate(410,997) rotate(-90)" font-size="15" letter-spacing="3" fill="#fff">BOGAUDIO</text>
<polyline fill="none" stroke="#1ee01e" stroke-width="2.5" points="437,912 478,912 489,930 499,986 580,986 581,660 583,638 585,638 587,986 613,986 614,692 617,700 618,986 638,986 639,805 642,805 643,986 658,986 659,921 661,921 662,986"/>
</g>
<g>
<rect x="1603" y="0" width="792" height="500" fill="#000"/>
<rect x="1603" y="0" width="3" height="500" fill="#bbb"/>
<g transform="translate(1227,0)"><use href="#ajacks"/><use href="#grid"/></g>
<text class="m" x="1647" y="16" font-size="12" fill="#bbb" xml:space="preserve">Peaks (+/-2.7): <tspan fill="#22c022">A: 1904.3</tspan></text>
<g class="m" font-size="11" fill="#aaa" text-anchor="middle"><text transform="translate(1654,67) rotate(-90)">12</text><text transform="translate(1654,137) rotate(-90)">0</text><text transform="translate(1654,206) rotate(-90)">-12</text><text transform="translate(1654,276) rotate(-90)">-24</text><text transform="translate(1654,415) rotate(-90)">-48</text><text transform="translate(1654,480) rotate(-90)">dB</text></g>
<g class="m" font-size="12" fill="#aaa"><text x="1667" y="500">Hz</text><text x="1802" y="500">100</text><text x="1959" y="500">1k</text><text x="2257" y="500">10k</text></g>
<text transform="translate(1620,496) rotate(-90)" font-size="15" letter-spacing="3" fill="#fff">ANALYZER-XL</text>
<text transform="translate(1637,496) rotate(-90)" font-size="15" letter-spacing="3" fill="#fff">BOGAUDIO</text>
<polyline fill="none" stroke="#1ee01e" stroke-width="2.5" points="1661,377 1702,377 1718,406 1727,485 2026,485 2026,132 2028,132 2028,485 2112,485 2112,357 2114,357 2114,485 2170,485 2170,297 2172,297 2172,485 2216,485 2216,478 2218,478 2218,485 2255,485 2255,374 2257,374 2257,485 2318,485 2318,425 2320,425 2320,485 2370,485 2370,465 2372,465 2372,485 2395,485"/>
</g>
<g>
<rect x="1603" y="501" width="792" height="504" fill="#000"/>
<rect x="1603" y="501" width="3" height="504" fill="#bbb"/>
<g transform="translate(1227,501)"><use href="#ajacks"/><use href="#grid"/></g>
<text class="m" x="1647" y="517" font-size="12" fill="#bbb" xml:space="preserve">Peaks (+/-2.7): <tspan fill="#22c022">A: 1904.3</tspan></text>
<g class="m" font-size="11" fill="#aaa" text-anchor="middle"><text transform="translate(1654,568) rotate(-90)">12</text><text transform="translate(1654,638) rotate(-90)">0</text><text transform="translate(1654,707) rotate(-90)">-12</text><text transform="translate(1654,777) rotate(-90)">-24</text><text transform="translate(1654,916) rotate(-90)">-48</text><text transform="translate(1654,981) rotate(-90)">dB</text></g>
<g class="m" font-size="12" fill="#aaa"><text x="1667" y="1001">Hz</text><text x="1802" y="1001">100</text><text x="1959" y="1001">1k</text><text x="2257" y="1001">10k</text></g>
<text transform="translate(1620,997) rotate(-90)" font-size="15" letter-spacing="3" fill="#fff">ANALYZER-XL</text>
<text transform="translate(1637,997) rotate(-90)" font-size="15" letter-spacing="3" fill="#fff">BOGAUDIO</text>
<polyline fill="none" stroke="#1ee01e" stroke-width="2.5" points="1661,759 1702,759 1718,788 1734,986 2026,986 2026,638 2028,638 2028,986 2112,986 2112,701 2114,701 2114,986 2170,986 2170,806 2172,806 2172,986 2216,986 2216,928 2218,928 2218,986 2395,986"/>
</g>

<!-- Cables -->
<g fill="none" stroke-width="9" stroke-linecap="round" opacity="0.72">
<path d="M35 436 Q95 520 148 587" stroke="#8a3fd6"/>
<path d="M148 587 Q185 770 213 938" stroke="#8a3fd6"/>
<path d="M148 587 Q210 480 265 377" stroke="#e03a4a"/>
<path d="M161 436 Q210 690 255 938" stroke="#3c90de"/>
<path d="M223 441 Q310 240 395 33" stroke="#3c90de"/>
<path d="M223 377 Q190 410 161 436" stroke="#f0a830"/>
<path d="M339 938 Q370 740 395 535" stroke="#e03a4a"/>
<path d="M148 637 Q705 545 1262 436" stroke="#d08a28"/>
<path d="M148 637 Q820 510 1492 377" stroke="#169a60"/>
<path d="M148 637 Q795 800 1440 938" stroke="#b82838"/>
<path d="M1389 436 Q1420 400 1450 377" stroke="#3c90de"/>
<path d="M1450 441 Q1540 240 1622 33" stroke="#e03a4a"/>
<path d="M1389 436 Q1440 690 1482 938" stroke="#f0a830"/>
<path d="M1567 938 Q1595 740 1622 535" stroke="#18a868"/>
</g>
<g>
<circle cx="35" cy="436" r="15" fill="#8a3fd6"/><use href="#pld" x="35" y="436"/>
<circle cx="148" cy="587" r="15" fill="#8a3fd6"/><use href="#pld" x="148" y="587"/>
<circle cx="148" cy="637" r="15" fill="#e03a4a"/><circle cx="148" cy="637" r="9" fill="#e4e4e4"/><circle cx="148" cy="637" r="6.5" fill="#2e4418"/>
<circle cx="213" cy="938" r="15" fill="#8a3fd6"/><use href="#pld" x="213" y="938"/>
<circle cx="265" cy="377" r="15" fill="#e03a4a"/><use href="#pld" x="265" y="377"/>
<circle cx="161" cy="436" r="15" fill="#3c90de"/><use href="#pl" x="161" y="436"/>
<circle cx="255" cy="938" r="15" fill="#3c90de"/><use href="#pl" x="255" y="938"/>
<circle cx="223" cy="441" r="15" fill="#3c90de"/><use href="#pl" x="223" y="441"/>
<circle cx="395" cy="33" r="15" fill="#3c90de"/><use href="#pl" x="395" y="33"/>
<circle cx="223" cy="377" r="15" fill="#f0a830"/><use href="#pl" x="223" y="377"/>
<circle cx="339" cy="938" r="15" fill="#e03a4a"/><use href="#pl" x="339" y="938"/>
<circle cx="395" cy="535" r="15" fill="#e03a4a"/><use href="#pl" x="395" y="535"/>
<circle cx="1262" cy="436" r="15" fill="#f0a830"/><circle cx="1262" cy="436" r="9" fill="#e4e4e4"/><circle cx="1262" cy="436" r="6.5" fill="#2e4418"/>
<circle cx="1492" cy="377" r="15" fill="#18a868"/><circle cx="1492" cy="377" r="9" fill="#e4e4e4"/><circle cx="1492" cy="377" r="6.5" fill="#2e4418"/>
<circle cx="1440" cy="938" r="15" fill="#e03a4a"/><circle cx="1440" cy="938" r="9" fill="#e4e4e4"/><circle cx="1440" cy="938" r="6.5" fill="#2e4418"/>
<circle cx="1389" cy="436" r="15" fill="#f0a830"/><use href="#pl" x="1389" y="436"/>
<circle cx="1450" cy="377" r="15" fill="#3c90de"/><use href="#pl" x="1450" y="377"/>
<circle cx="1450" cy="441" r="15" fill="#e03a4a"/><use href="#pl" x="1450" y="441"/>
<circle cx="1622" cy="33" r="15" fill="#e03a4a"/><use href="#pl" x="1622" y="33"/>
<circle cx="1482" cy="938" r="15" fill="#f0a830"/><use href="#pl" x="1482" y="938"/>
<circle cx="1567" cy="938" r="15" fill="#18a868"/><use href="#pl" x="1567" y="938"/>
<circle cx="1622" cy="535" r="15" fill="#18a868"/><use href="#pl" x="1622" y="535"/>
</g>
</svg>
</body></html>
